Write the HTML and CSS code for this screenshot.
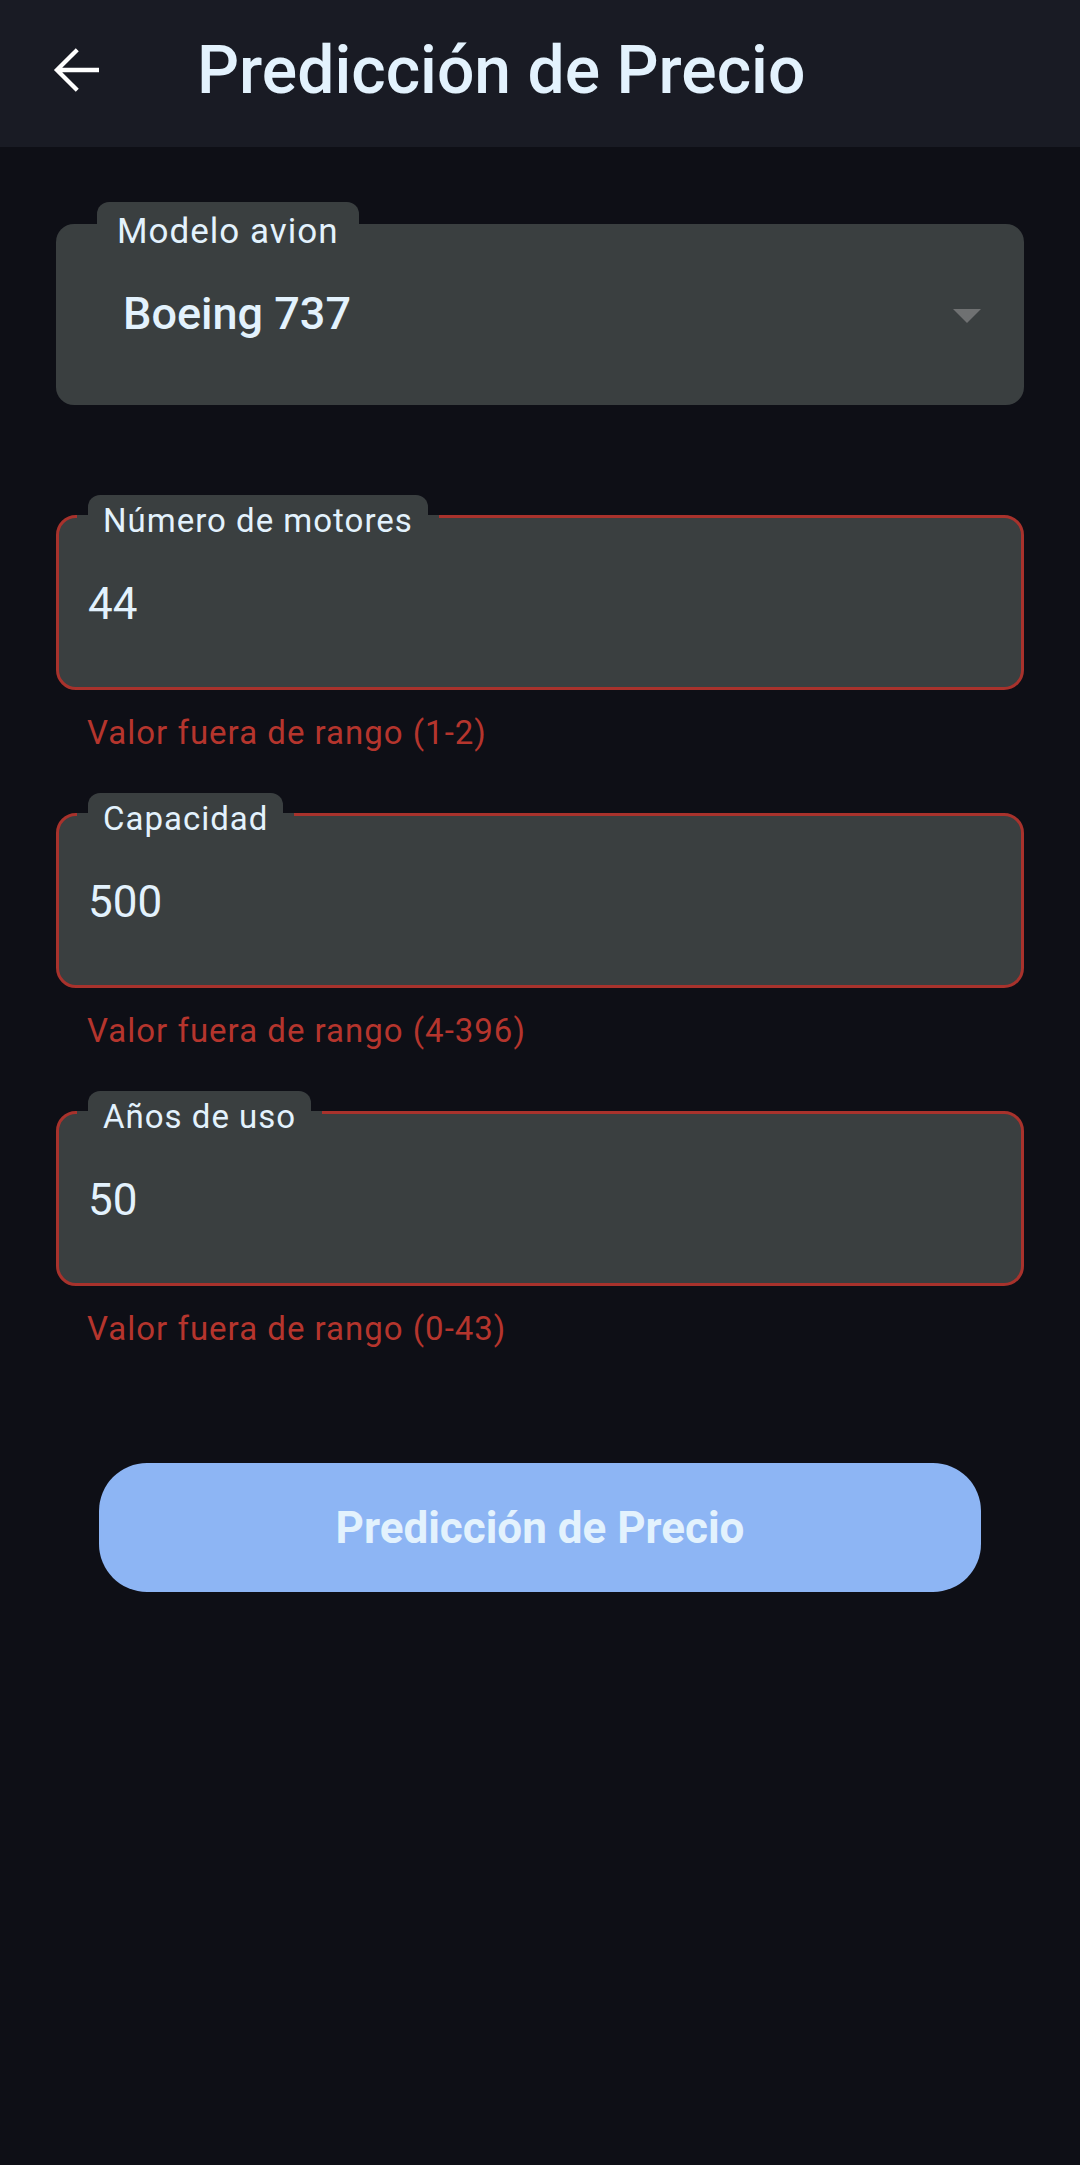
FILE: index.html
```html
<!DOCTYPE html>
<html lang="es">
<head>
<meta charset="utf-8">
<title>Predicción de Precio</title>
<link rel="stylesheet" href="styles.css">
</head>
<body>
<header class="appbar">
  <button class="back" aria-label="Atrás">
    <svg viewBox="0 0 24 24"><path d="M20 12H5.2M12.1 4.6L4.7 12l7.4 7.4" fill="none" stroke="#ffffff" stroke-width="1.55"/></svg>
  </button>
  <h1 class="title">Predicción de Precio</h1>
</header>
<main class="form">
  <div class="dropdown">
    <span class="tab tab-dd">Modelo avion</span>
    <div class="dd-box">
      <span class="dd-value">Boeing 737</span>
      <span class="caret"></span>
    </div>
  </div>

  <div class="field">
    <div class="box"><span class="tab tab-field">Número de motores</span><span class="value">44</span></div>
    <p class="error">Valor fuera de rango (1-2)</p>
  </div>

  <div class="field">
    <div class="box"><span class="tab tab-field">Capacidad</span><span class="value">500</span></div>
    <p class="error">Valor fuera de rango (4-396)</p>
  </div>

  <div class="field">
    <div class="box"><span class="tab tab-field">Años de uso</span><span class="value">50</span></div>
    <p class="error">Valor fuera de rango (0-43)</p>
  </div>

  <button class="predict">Predicción de Precio</button>
</main>
</body>
</html>
```
FILE: styles.css
```css
html, body {
  margin: 0;
  padding: 0;
}
body {
  background: #0e0f16;
  font-family: Roboto, "Noto Sans", sans-serif;
  min-height: 2165px;
}

.appbar {
  height: 147px;
  background: #191b24;
  display: flex;
  align-items: center;
  padding-left: 44px;
  box-sizing: border-box;
}
.back {
  width: 66px;
  height: 66px;
  margin-top: -7px;
  padding: 0;
  border: 0;
  background: none;
}
.back svg {
  display: block;
  width: 66px;
  height: 66px;
}
.title {
  margin: -6px 0 0 87px;
  font-size: 66px;
  font-weight: 500;
  line-height: 78px;
  color: #e3f2fd;
}

.form {
  padding: 55px 56px 0;
}

.tab {
  position: absolute;
  z-index: 1;
  background: #3a3f40;
  color: #e3f2fd;
  font-size: 33px;
  letter-spacing: 1px;
  border-radius: 12px 12px 0 0;
  white-space: nowrap;
}

.dropdown {
  position: relative;
  padding-top: 22px;
}
.tab-dd {
  top: 0;
  left: 41px;
  padding: 0 20px;
  height: 60px;
  line-height: 60px;
  font-size: 35px;
}
.dd-box {
  height: 181px;
  background: #3a3f40;
  border-radius: 18px;
  display: flex;
  align-items: center;
  justify-content: space-between;
  padding: 0 43px 0 67px;
}
.dd-value {
  font-size: 45px;
  font-weight: 500;
  color: #e3f2fd;
  margin-top: -3px;
}
.caret {
  width: 0;
  height: 0;
  border-left: 14px solid transparent;
  border-right: 14px solid transparent;
  border-top: 14px solid #6f7172;
  margin-top: 3px;
}

.field {
  padding-top: 21px;
}
.dropdown + .field {
  margin-top: 89px;
}
.field + .field {
  margin-top: 39px;
}
.box {
  position: relative;
  height: 175px;
  box-sizing: border-box;
  border: 3px solid #a8322c;
  border-radius: 20px;
  background: #3a3f40;
  display: flex;
  align-items: center;
  padding-left: 29px;
}
.tab-field {
  top: -23px;
  left: 29px;
  padding: 0 15px;
  height: 52px;
  line-height: 52px;
}
.tab-field::before {
  content: "";
  position: absolute;
  z-index: -1;
  left: -11px;
  right: -11px;
  top: 20px;
  height: 3px;
  background: #3a3f40;
}
.value {
  font-size: 44px;
  color: #e3f2fd;
  margin-top: 2px;
}
.error {
  margin: 23px 0 0 31px;
  font-size: 33px;
  line-height: 40px;
  letter-spacing: 1px;
  color: #b5352d;
}

.predict {
  display: block;
  width: 882px;
  height: 129px;
  margin: 114px 0 0 43px;
  border: 0;
  border-radius: 48px;
  background: #8db5f4;
  color: #e3f2fd;
  font-family: Roboto, "Noto Sans", sans-serif;
  font-size: 44px;
  font-weight: 700;
  padding: 0;
}
```
